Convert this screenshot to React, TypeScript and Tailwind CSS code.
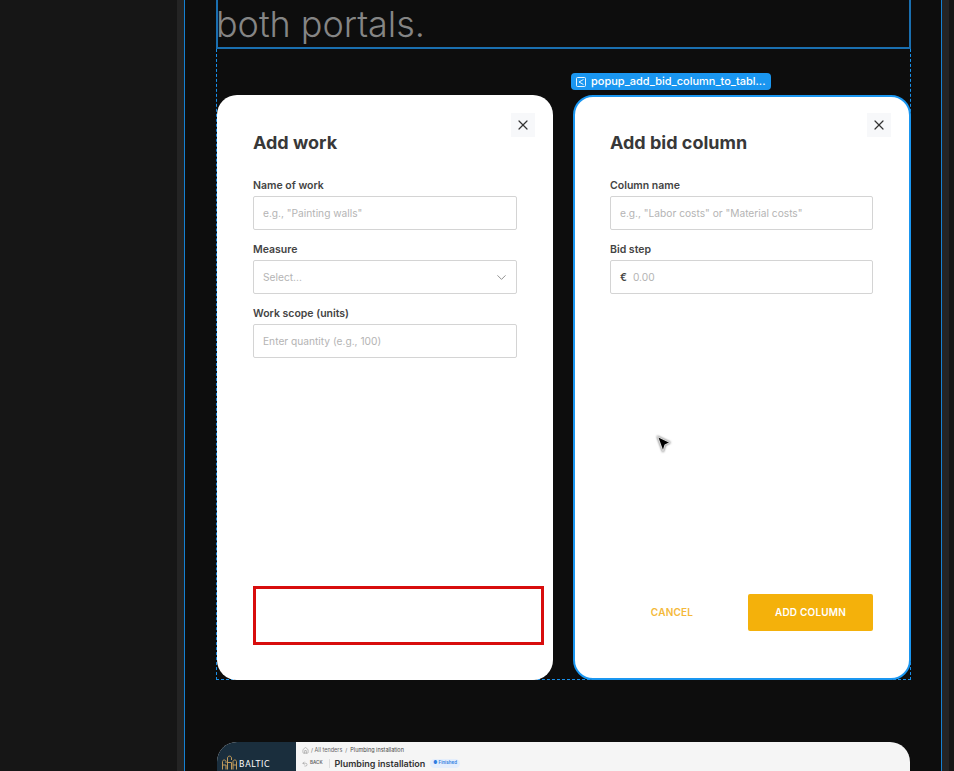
import { ChevronDown, Home, Undo2, X } from "lucide-react";
import type { ReactNode } from "react";

function Field({ label, children }: { label: string; children: ReactNode }) {
  return (
    <div className="flex flex-col">
      <label className="h-[21px] text-[10.5px] leading-[21px] font-semibold text-[#444444]">{label}</label>
      <div className="flex h-[34px] items-center rounded-[2px] border border-[#d4d4d4] bg-white pt-px pr-[10px] pl-[9px] text-[10.2px] text-[#b4b4b4]">
        {children}
      </div>
    </div>
  );
}

function CloseButton({ className }: { className: string }) {
  return (
    <button className={`absolute right-[18px] flex h-[24px] w-[24px] items-center justify-center bg-[#f7f8fa] text-[#333333] ${className}`}>
      <X size={16} strokeWidth={1.8} />
    </button>
  );
}

function Cursor() {
  return (
    <svg className="absolute top-[433px] left-[654px] drop-shadow-[0_0_1px_rgba(0,0,0,0.6)]" width="19" height="21" viewBox="0 0 19 21">
      <path d="M3.5 3.5 L16 9.5 L11 12 L9 18.5 Z" fill="#000" stroke="#d8d8d8" strokeWidth="1.2" strokeLinejoin="round" />
    </svg>
  );
}

function BalticLogo() {
  return (
    <svg width="15" height="15" viewBox="0 0 15 15" fill="none" stroke="#c19a5b" strokeWidth="1">
      <path d="M0.5 14.5V6.5C0.5 4.5 4 4.5 4 6.5V8M0.5 10H4V14.5" />
      <path d="M5.5 14.5V3C5.5 0.5 9.5 0.5 9.5 3V5M5.5 7.5H9.5V14.5" />
      <path d="M11 14.5V6.5C11 4.5 14.5 4.5 14.5 6.5V14.5M11 10H14.5" />
    </svg>
  );
}

export default function App() {
  return (
    <div className="relative flex h-[771px] w-[954px] overflow-hidden bg-[#0d0d0d] font-['Inter',sans-serif]">
      <aside className="w-[177px] shrink-0 bg-[#161616]" />
      <div className="w-[7px] shrink-0 bg-[#242424]" />
      <main className="flex w-[758px] shrink-0 flex-col border-x border-[#1580d0] pr-[30px] pl-[31px]">
        <div className="flex h-[49px] shrink-0 items-end border-x-2 border-b-2 border-x-[#1a6fb0] border-b-[#1a6fb0]">
          <p className="mb-[1px] -ml-[2px] text-[36px] leading-[44px] font-light tracking-[-0.05px] text-[#858585]">both portals.</p>
        </div>

        <section className="relative flex h-[631px] shrink-0 gap-[20px] border-x border-b border-dashed border-[#1a8fe8] pt-[46px]">
          <div className="absolute top-[24px] left-[354px] flex h-[17px] w-[200px] items-center gap-[5px] rounded-[4px] bg-[#1a96f0] px-[5px] text-[11px] font-medium whitespace-nowrap text-white">
            <svg width="10" height="10" viewBox="0 0 10 10" fill="none" stroke="white" strokeWidth="0.9">
              <rect x="0.5" y="0.5" width="9" height="9" rx="1" />
              <path d="M7.5 2.5L3 5L7.5 7.5" />
            </svg>
            <span>popup_add_bid_column_to_tabl...</span>
          </div>

          <div className="relative flex h-[585px] w-[336px] shrink-0 flex-col rounded-[20px] bg-white px-[36px] pb-[35px]">
            <CloseButton className="top-[18px]" />
            <h2 className="mt-[36px] mb-[20px] h-[24px] text-[18px] leading-[24px] font-bold text-[#383838]">Add work</h2>
            <div className="flex w-[264px] flex-col gap-[9px]">
              <Field label="Name of work">e.g., "Painting walls"</Field>
              <Field label="Measure">
                <span className="flex-1">Select...</span>
                <ChevronDown size={15} strokeWidth={1.3} className="-mr-[3px] text-[#777777]" />
              </Field>
              <Field label="Work scope (units)">Enter quantity (e.g., 100)</Field>
            </div>
            <div className="mt-auto h-[59px] w-[291px] border-[3px] border-[#d80d0d]" />
          </div>

          <div className="relative flex h-[585px] w-[338px] shrink-0 flex-col rounded-[20px] border-2 border-[#1a96f0] bg-white px-[35px] pb-[47px]">
            <CloseButton className="top-[16px]" />
            <h2 className="mt-[34px] mb-[20px] h-[24px] text-[18px] leading-[24px] font-bold text-[#383838]">Add bid column</h2>
            <div className="flex w-[263px] flex-col gap-[9px]">
              <Field label="Column name">e.g., "Labor costs" or "Material costs"</Field>
              <Field label="Bid step">
                <span className="mr-[6px] font-semibold text-[#444444]">€</span>
                0.00
              </Field>
            </div>
            <div className="mt-auto flex w-[263px] items-center justify-between">
              <button className="w-[124px] text-center text-[10px] font-semibold tracking-[0.2px] text-[#f4b93a]">CANCEL</button>
              <button className="h-[37px] w-[125px] rounded-[2px] bg-[#f4b10b] text-[10px] font-semibold tracking-[0.2px] text-white">ADD COLUMN</button>
            </div>
          </div>
        </section>

        <div className="mt-[62px] ml-px flex h-[60px] w-[693px] shrink-0 overflow-hidden rounded-t-[20px] bg-[#f5f5f5]">
          <div className="flex w-[79px] items-start gap-[2px] bg-[#1a2e3d] pt-[13px] pl-[5px]">
            <BalticLogo />
            <span className="mt-[2px] font-['DejaVu_Sans',sans-serif] text-[8px] leading-[15px] font-normal tracking-[0.7px] text-white">BALTIC</span>
          </div>
          <div className="flex flex-col pt-[4px] pl-[6px] text-[5.5px] text-[#666666]">
            <div className="flex h-[9px] items-center">
              <Home size={7} strokeWidth={1.5} className="text-[#777777]" />
              <span className="ml-[2px]">/ All tenders</span>
              <span className="ml-[3px]">/</span>
              <span className="ml-[3px] text-[#444444]">Plumbing installation</span>
            </div>
            <div className="mt-[2px] flex items-center">
              <Undo2 size={6} strokeWidth={1.5} />
              <span className="ml-[2px] text-[4.5px] font-semibold">BACK</span>
              <span className="ml-[6px] h-[9px] border-l border-[#dddddd]" />
              <span className="ml-[5px] text-[9px] font-semibold text-[#333333]">Plumbing installation</span>
              <span className="ml-[5px] rounded-full bg-[#e4eefc] px-[3px] py-[1px] text-[4.5px] font-semibold text-[#2f7de1]">● Finished</span>
            </div>
          </div>
        </div>
      </main>
      <div className="w-[7px] shrink-0 bg-[#242424]" />
      <div className="flex-1 bg-[#161616]" />
      <Cursor />
    </div>
  );
}
